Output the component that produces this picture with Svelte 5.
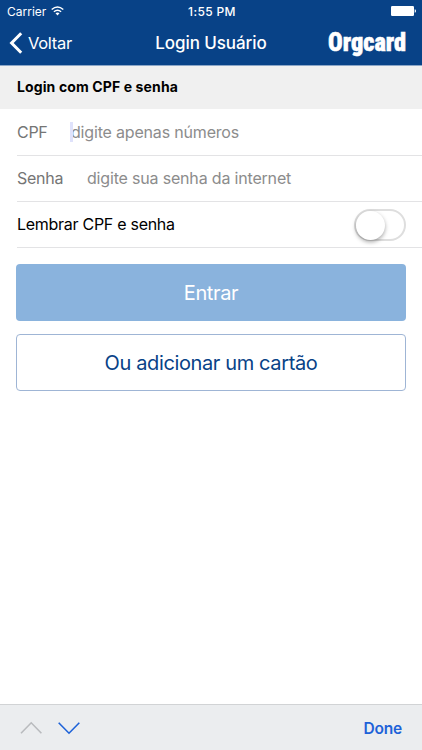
<script lang="ts">
	let cpf = $state('');
	let senha = $state('');
	let lembrar = $state(false);
</script>

<div class="screen">
	<header>
		<div class="status-bar">
			<div class="carrier">
				<span>Carrier</span>
				<svg width="13" height="10" viewBox="0 0 13 10" fill="none" stroke="#fff" stroke-width="1.5">
					<path d="M.7 3.5Q6.5-1.5 12.3 3.5" />
					<path d="M2.9 5.8Q6.5 2.6 10.1 5.8" />
					<path d="M4.5 7.2Q6.5 5.6 8.5 7.2L6.5 9.4Z" fill="#fff" stroke="none" />
				</svg>
			</div>
			<span class="time">1:55 PM</span>
			<svg class="battery" width="26" height="10" viewBox="0 0 26 10" fill="#fff">
				<rect width="23" height="10" rx="1.2" />
				<path d="M23.7 3.2q1.3.3 1.3 1.8t-1.3 1.8z" />
			</svg>
		</div>
		<nav>
			<button class="back" type="button">
				<svg width="14" height="22" viewBox="0 0 14 22" fill="none" stroke="#fff" stroke-width="3">
					<path d="M12.2 1.3 2.6 11l9.6 9.7" />
				</svg>
				<span>Voltar</span>
			</button>
			<h1>Login Usuário</h1>
			<svg class="logo" width="82" height="40" viewBox="0 0 82 40">
				<text x="2" y="28" textLength="78" lengthAdjust="spacingAndGlyphs">Orgcard</text>
			</svg>
		</nav>
	</header>

	<h2>Login com CPF e senha</h2>

	<form>
		<label class="row cpf">
			<span>CPF</span>
			<input type="text" placeholder="digite apenas números" bind:value={cpf} />
		</label>
		<label class="row senha">
			<span>Senha</span>
			<input type="password" placeholder="digite sua senha da internet" bind:value={senha} />
		</label>
		<div class="row remember">
			<span>Lembrar CPF e senha</span>
			<button
				class="switch"
				class:on={lembrar}
				type="button"
				role="switch"
				aria-checked={lembrar}
				aria-label="Lembrar CPF e senha"
				onclick={() => (lembrar = !lembrar)}
			>
				<i></i>
			</button>
		</div>
		<div class="actions">
			<button class="primary" type="button"><span>Entrar</span></button>
			<button class="secondary" type="button"><span>Ou adicionar um cartão</span></button>
		</div>
	</form>

	<footer>
		<svg width="60" height="14" viewBox="0 0 60 14" fill="none" stroke-width="1.6">
			<path d="M1 12.3 11.2 1.8l10.2 10.5" stroke="#b9bbbe" />
			<path d="M38.7 1.7 49 12.2 59.3 1.7" stroke="#1d62d8" />
		</svg>
		<button class="done" type="button">Done</button>
	</footer>
</div>

<style>
	:global(body) {
		margin: 0;
	}

	.screen {
		display: flex;
		flex-direction: column;
		width: 422px;
		height: 750px;
		background: #fff;
		color: #000;
		font-family: Inter, "Liberation Sans", sans-serif;
		overflow: hidden;
	}

	button {
		padding: 0;
		border: 0;
		background: none;
		font: inherit;
		letter-spacing: inherit;
	}

	svg {
		display: block;
	}

	header {
		height: 66px;
		background: #084287;
		border-bottom: 1px solid #8ba6c7;
		color: #fff;
		box-sizing: border-box;
	}

	.status-bar {
		display: grid;
		grid-template-columns: 1fr auto 1fr;
		align-items: center;
		height: 22px;
		padding: 0 5px 0 7px;
		font-size: 12px;
	}

	.carrier {
		display: flex;
		align-items: center;
		gap: 5px;
	}

	.time {
		font-weight: 500;
		letter-spacing: 0.35px;
	}

	.battery {
		justify-self: end;
	}

	nav {
		display: grid;
		grid-template-columns: 1fr auto 1fr;
		align-items: center;
		height: 42px;
		padding: 0 14px 0 14px;
	}

	.back {
		display: flex;
		align-items: center;
		gap: 5px;
		margin-left: -5px;
		color: #fff;
		font-size: 16.5px;
		letter-spacing: -0.3px;
	}

	h1 {
		margin: 0;
		font-size: 17px;
		font-weight: 500;
		letter-spacing: -0.08px;
	}

	.logo {
		justify-self: end;
		overflow: visible;
	}

	.logo text {
		fill: #fff;
		stroke: #fff;
		stroke-width: 0.5;
		font-family: Roboto, Inter, sans-serif;
		font-size: 26px;
		font-stretch: 75%;
		font-weight: 900;
	}

	h2 {
		height: 43px;
		margin: 0;
		padding-left: 17px;
		background: #f0f0f0;
		font-size: 14px;
		font-weight: 700;
		letter-spacing: 0.12px;
		line-height: 42px;
	}

	.row {
		display: flex;
		align-items: center;
		height: 46px;
		margin-left: 17px;
		border-bottom: 1px solid #e3e3e5;
		box-sizing: border-box;
		font-size: 16px;
		letter-spacing: -0.28px;
	}

	.row > span {
		padding-bottom: 1px;
	}

	.cpf {
		height: 47px;
	}

	.cpf,
	.senha {
		color: #757575;
	}

	.cpf > span {
		width: 53px;
		padding-bottom: 0;
	}

	.senha > span {
		width: 70px;
	}

	input {
		flex: 1;
		min-width: 0;
		height: 20px;
		padding: 0;
		border: 0;
		outline: 0;
		background: none;
		font: inherit;
		letter-spacing: -0.18px;
	}

	input::placeholder {
		color: #8c8c8c;
		opacity: 1;
	}

	.cpf input {
		border-left: 3px solid #dfe2fb;
		text-indent: -2px;
	}

	.senha input {
		margin-bottom: 1px;
	}

	.remember {
		justify-content: space-between;
		padding-right: 16.5px;
	}

	.switch {
		width: 52px;
		height: 32px;
		padding: 0;
		border: 2px solid #dedede;
		border-radius: 16px;
		box-sizing: border-box;
	}

	.switch i {
		display: block;
		width: 29px;
		height: 29px;
		border-radius: 50%;
		background: #fff;
		box-shadow: 0 2px 4px rgba(0, 0, 0, 0.35);
	}

	.switch.on {
		background: #4cd964;
	}

	.switch.on i {
		margin-left: 19px;
	}

	.actions {
		display: flex;
		flex-direction: column;
		gap: 13px;
		padding: 16px 16px 0;
	}

	.actions button {
		height: 57px;
		border-radius: 4px;
		box-sizing: border-box;
		font-size: 20px;
		letter-spacing: -0.37px;
	}

	.primary {
		background: #8ab3dd;
		color: #fff;
	}

	.secondary {
		border: 1px solid #9fb5d5;
		color: #084287;
	}

	footer {
		display: flex;
		align-items: center;
		justify-content: space-between;
		height: 46px;
		margin-top: auto;
		padding: 0 20px;
		border-top: 1px solid #d1d3d5;
		box-sizing: border-box;
		background: #ebedef;
	}

	.done {
		padding-top: 1px;
		color: #1d62d8;
		font-size: 15.5px;
		font-weight: 600;
		letter-spacing: -0.2px;
	}
</style>
